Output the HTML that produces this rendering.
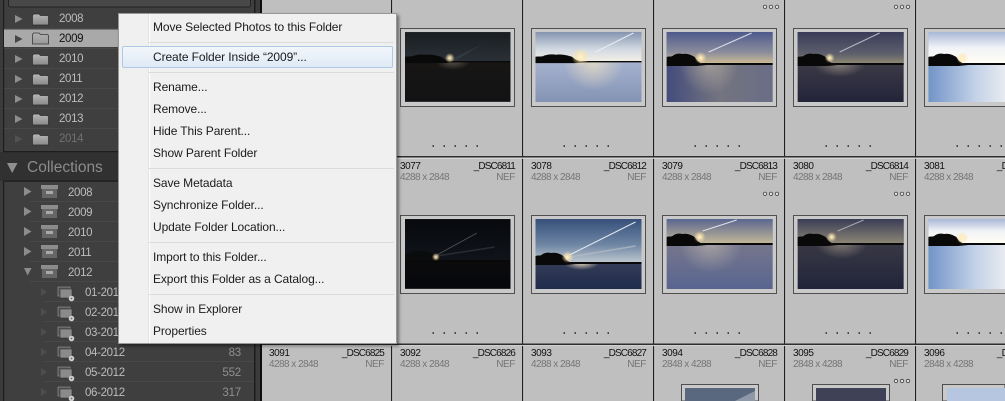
<!DOCTYPE html>
<html><head><meta charset="utf-8"><style>
html,body{margin:0;padding:0;background:#3a3a3a;width:1005px;height:401px;overflow:hidden}
#w{position:relative;width:1005px;height:401px;overflow:hidden;font-family:"Liberation Sans",sans-serif;background:#3a3a3a}
#w div{position:absolute;white-space:nowrap}
svg{position:absolute;left:0;top:0;display:block}
.s{font-size:11.5px;height:16px;line-height:16px;color:#bdbdbd;letter-spacing:-.35px}
.c{font-size:11.5px;height:16px;line-height:16px;color:#8f8f8f;letter-spacing:-.2px;right:764px}
.t{font-size:10px;line-height:11px;height:11px;letter-spacing:-.45px;color:#111}
.u{font-size:10px;line-height:11px;height:11px;letter-spacing:-.55px;color:#757575}
.n{font-size:10px;line-height:11px;height:11px;letter-spacing:-.85px;color:#111;text-align:right;width:70px}
.f{font-size:10px;line-height:11px;height:11px;letter-spacing:-.4px;color:#757575;text-align:right;width:40px}
.m{left:153px;font-size:12px;line-height:16px;height:16px;color:#1b1b1b;letter-spacing:-.1px}
</style></head><body><div id="w">

<svg width="1005" height="401" viewBox="0 0 1005 401">
<defs>
<linearGradient id="fo" x1="0" y1="0" x2="0" y2="1"><stop offset="0" stop-color="#b6b6b6"/><stop offset="1" stop-color="#8a8a8a"/></linearGradient>
<linearGradient id="fs" x1="0" y1="0" x2="0" y2="1"><stop offset="0" stop-color="#b0b0b0"/><stop offset="1" stop-color="#9a9a9a"/></linearGradient>
<path id="fd" d="M.5 12V2.500L1.500 1H7L8.500 2.500H15.500L16.500 3.500V12Z" fill="url(#fo)" stroke="#2c2c2c" stroke-width=".7"/>
<g id="bx"><rect x="0" y="0" width="17" height="4" fill="#8c8c8c"/><rect x="1" y="4" width="15" height="9" fill="#666"/><rect x="5" y="6" width="7" height="3" fill="#a8a8a8"/></g>
<g id="cl"><rect x="0" y="0" width="12" height="9" fill="#555" stroke="#999" stroke-width=".6"/><rect x="2" y="2" width="12" height="9" fill="#8b8b8b" stroke="#333" stroke-width=".6"/><circle cx="13.500" cy="11.500" r="2.800" fill="#cfcfcf"/><circle cx="13.500" cy="11.500" r=".9" fill="#6a6a6a"/></g>
<path id="tree" d="M0 3V-6C2-7 4-6 6-7C8-9 12-10 16-9C20-10 25-8 28-6L31-2L34 0H106V2H40L30 3Z" fill="#090909"/>
<radialGradient id="sun"><stop offset="0" stop-color="#fff7d8"/><stop offset=".3" stop-color="#ffeab4" stop-opacity=".8"/><stop offset="1" stop-color="#ffe0a0" stop-opacity="0"/></radialGradient>
<radialGradient id="refl"><stop offset="0" stop-color="#f7e7c4" stop-opacity=".85"/><stop offset="1" stop-color="#f7e7c4" stop-opacity="0"/></radialGradient>
<linearGradient id="a1" x1="0" y1="0" x2="0" y2="1"><stop offset="0" stop-color="#1a1e22"/><stop offset="1" stop-color="#2a3036"/></linearGradient>
<linearGradient id="b1" x1="0" y1="0" x2="0" y2="1"><stop offset="0" stop-color="#1c1916"/><stop offset="1" stop-color="#121214"/></linearGradient>
<linearGradient id="a2" x1="0" y1="0" x2="0" y2="1"><stop offset="0" stop-color="#8594b0"/><stop offset=".6" stop-color="#d2d9e2"/><stop offset="1" stop-color="#f2efe6"/></linearGradient>
<linearGradient id="b2" x1="0" y1="0" x2="0" y2="1"><stop offset="0" stop-color="#c0cae2"/><stop offset="1" stop-color="#8493b4"/></linearGradient>
<linearGradient id="a3" x1="0" y1="0" x2="0" y2="1"><stop offset="0" stop-color="#4f5a8c"/><stop offset=".65" stop-color="#8b8d9c"/><stop offset="1" stop-color="#cbb995"/></linearGradient>
<linearGradient id="b3" x1="0" y1="0" x2="1" y2="0"><stop offset="0" stop-color="#434c7c"/><stop offset=".5" stop-color="#74747f"/><stop offset="1" stop-color="#6a6d86"/></linearGradient>
<linearGradient id="a4" x1="0" y1="0" x2="0" y2="1"><stop offset="0" stop-color="#383c58"/><stop offset=".7" stop-color="#5d5f6c"/><stop offset="1" stop-color="#8c8672"/></linearGradient>
<linearGradient id="b4" x1="0" y1="0" x2="0" y2="1"><stop offset="0" stop-color="#4f4c50"/><stop offset="1" stop-color="#24243a"/></linearGradient>
<linearGradient id="a5" x1="0" y1="0" x2="0" y2="1"><stop offset="0" stop-color="#a9b8d8"/><stop offset=".5" stop-color="#f0f2f6"/><stop offset="1" stop-color="#fffdf4"/></linearGradient>
<linearGradient id="b5" x1="0" y1="0" x2="1" y2="0"><stop offset="0" stop-color="#7194c8"/><stop offset=".45" stop-color="#c4d2e8"/><stop offset=".8" stop-color="#f2f2f2"/></linearGradient>
<linearGradient id="a6" x1="0" y1="0" x2="0" y2="1"><stop offset="0" stop-color="#07090d"/><stop offset="1" stop-color="#10141a"/></linearGradient>
<linearGradient id="b6" x1="0" y1="0" x2="0" y2="1"><stop offset="0" stop-color="#14120f"/><stop offset="1" stop-color="#06070b"/></linearGradient>
<linearGradient id="a7" x1="0" y1="0" x2="0" y2="1"><stop offset="0" stop-color="#36507a"/><stop offset=".6" stop-color="#6f86a4"/><stop offset="1" stop-color="#bcc6ce"/></linearGradient>
<linearGradient id="b7" x1="0" y1="0" x2="0" y2="1"><stop offset="0" stop-color="#56586a"/><stop offset="1" stop-color="#202c4c"/></linearGradient>
<linearGradient id="a8" x1="0" y1="0" x2="0" y2="1"><stop offset="0" stop-color="#5a6690"/><stop offset="1" stop-color="#c0b698"/></linearGradient>
<linearGradient id="b8" x1="0" y1="0" x2="0" y2="1"><stop offset="0" stop-color="#85808a"/><stop offset="1" stop-color="#596590"/></linearGradient>
<linearGradient id="a9" x1="0" y1="0" x2="0" y2="1"><stop offset="0" stop-color="#3a3d56"/><stop offset="1" stop-color="#8a8574"/></linearGradient>
<linearGradient id="b9" x1="0" y1="0" x2="0" y2="1"><stop offset="0" stop-color="#46434a"/><stop offset="1" stop-color="#21243a"/></linearGradient>
</defs>

<!-- sidebar -->
<rect x="0" y="0" width="262" height="401" fill="#3b3b3b"/>
<rect x="3" y="0" width="252" height="152" fill="#3f3f3f"/>
<rect x="3" y="0" width="1.200" height="152" fill="#1d1d1d"/>
<rect x="254" y="0" width="1.500" height="401" fill="#1c1c1c"/>
<rect x="260" y="0" width="2" height="401" fill="#0d0d0d"/>
<rect x="8.500" y="-6" width="242" height="13" rx="2" fill="#484848" stroke="#222"/>
<rect x="4" y="29.500" width="114" height="17.500" fill="#a9a9a9"/>
<rect x="0" y="152" width="254" height="29" fill="#313131"/>
<rect x="3" y="151" width="251" height="1.200" fill="#1d1d1d"/>
<rect x="3" y="181" width="251" height="220" fill="#3f3f3f"/>
<rect x="3" y="180.500" width="251" height="1.200" fill="#1a1a1a"/>
<rect x="3" y="181" width="1.200" height="220" fill="#1d1d1d"/>
<g fill="#484848"><rect x="4" y="28" width="114" height="1"/><rect x="4" y="48" width="114" height="1"/><rect x="4" y="68" width="114" height="1"/><rect x="4" y="88" width="114" height="1"/><rect x="4" y="108" width="114" height="1"/><rect x="4" y="128" width="114" height="1"/><rect x="30" y="201" width="224" height="1"/><rect x="30" y="221" width="224" height="1"/><rect x="30" y="241" width="224" height="1"/><rect x="30" y="261" width="224" height="1"/><rect x="30" y="281" width="224" height="1"/><rect x="44" y="301" width="210" height="1"/><rect x="44" y="321" width="210" height="1"/><rect x="44" y="341" width="210" height="1"/><rect x="44" y="361" width="210" height="1"/><rect x="44" y="381" width="210" height="1"/></g>

<g fill="#8d8d8d">
<path d="M15 15L22.500 19L15 23Z"/><path fill="#454545" d="M15 35L22.500 39L15 43Z"/><path d="M15 55L22.500 59L15 63Z"/><path d="M15 75L22.500 79L15 83Z"/><path d="M15 95L22.500 99L15 103Z"/><path d="M15 115L22.500 119L15 123Z"/>
<path fill="#525252" d="M15 135L22.500 139L15 143Z"/>
<path fill="#909090" d="M7 163H17.500L12.200 173Z"/>
<path d="M24 187L31.500 191.500L24 196Z"/><path d="M24 207L31.500 211.500L24 216Z"/><path d="M24 227L31.500 231.500L24 236Z"/><path d="M24 247L31.500 251.500L24 256Z"/><path d="M24 268H31.500L27.700 275.500Z"/>
<g fill="#4e4e4e"><path d="M41 288L47 292L41 296Z"/><path d="M41 308L47 312L41 316Z"/><path d="M41 328L47 332L41 336Z"/><path d="M41 348L47 352L41 356Z"/><path d="M41 368L47 372L41 376Z"/><path d="M41 388L47 392L41 396Z"/></g>
</g>
<use href="#fd" x="32" y="13"/>
<g transform="translate(32 32)"><path d="M.5 12V2.500L1.500 1H7L8.500 2.500H15.500L16.500 3.500V12Z" fill="url(#fs)" stroke="#3a3a3a" stroke-width=".8"/></g>
<use href="#fd" x="32" y="53"/><use href="#fd" x="32" y="73"/><use href="#fd" x="32" y="93"/><use href="#fd" x="32" y="113"/><use href="#fd" x="32" y="133"/>
<use href="#bx" x="41" y="185"/><use href="#bx" x="41" y="205"/><use href="#bx" x="41" y="225"/><use href="#bx" x="41" y="245"/><use href="#bx" x="41" y="265"/>
<use href="#cl" x="58" y="287"/><use href="#cl" x="58" y="307"/><use href="#cl" x="58" y="327"/><use href="#cl" x="58" y="347"/><use href="#cl" x="58" y="367"/><use href="#cl" x="58" y="387"/>

<!-- grid -->
<rect x="262" y="0" width="743" height="401" fill="#bfbfbf"/>
<g fill="#1f1f1f"><rect x="391" width="1.300" height="401"/><rect x="522" width="1.300" height="401"/><rect x="653" width="1.300" height="401"/><rect x="784" width="1.300" height="401"/><rect x="915" width="1.300" height="401"/></g>
<g fill="#d6d6d6"><rect x="392.300" width=".8" height="401"/><rect x="523.300" width=".8" height="401"/><rect x="654.300" width=".8" height="401"/><rect x="785.300" width=".8" height="401"/><rect x="916.300" width=".8" height="401"/></g>
<rect x="262" y="156" width="743" height="1.600" fill="#2e2e2e"/><rect x="262" y="157.600" width="743" height="1.200" fill="#dcdcdc"/>
<rect x="262" y="343.500" width="743" height="1.600" fill="#2e2e2e"/><rect x="262" y="345.100" width="743" height="1" fill="#d4d4d4"/>

<!-- frames -->
<g fill="#c9c9c9" stroke="#4f4f4f" stroke-width="1">
<rect x="400.500" y="28.500" width="114" height="78"/><rect x="531.500" y="28.500" width="114" height="78"/><rect x="662.500" y="28.500" width="114" height="78"/><rect x="793.500" y="28.500" width="114" height="78"/><rect x="924.500" y="28.500" width="114" height="78"/>
<rect x="400.500" y="215.500" width="114" height="78"/><rect x="531.500" y="215.500" width="114" height="78"/><rect x="662.500" y="215.500" width="114" height="78"/><rect x="793.500" y="215.500" width="114" height="78"/><rect x="924.500" y="215.500" width="114" height="78"/>
<path d="M681.500 401V384.500H758.500V401Z"/><path d="M812.500 401V384.500H889.500V401Z"/><path d="M942.500 401V384.500H1005V401Z"/>
</g>

<!-- photos row 1 -->
<svg x="405" y="32" width="105.500" height="70" viewBox="0 0 106 70"><rect width="106" height="70" fill="url(#b1)"/><ellipse cx="48" cy="29" rx="18" ry="9" fill="url(#refl)" opacity=".35"/><rect width="106" height="29" fill="url(#a1)"/><path d="M45 28L78 12L48 30Z" fill="#3c454e" opacity=".6"/><use href="#tree" transform="translate(0 29) scale(1.300 .7)"/><circle cx="45" cy="26" r="5" fill="url(#sun)"/></svg>
<svg x="535.500" y="32" width="106" height="70" viewBox="0 0 106 70"><rect width="106" height="70" fill="url(#b2)"/><ellipse cx="58" cy="30" rx="30" ry="28" fill="url(#refl)" opacity=".8"/><rect width="106" height="29" fill="url(#a2)"/><path d="M60 20L98 1" stroke="#e8edf5" stroke-width="1"/><use href="#tree" transform="translate(0 29) scale(1.300 .7)"/><circle cx="45" cy="25" r="9" fill="url(#sun)"/></svg>
<svg x="666.300" y="32" width="106.700" height="70" viewBox="0 0 106 70"><rect width="106" height="70" fill="url(#b3)"/><ellipse cx="42" cy="31" rx="30" ry="32" fill="url(#refl)" opacity=".45"/><rect width="106" height="31" fill="url(#a3)"/><path d="M42 20L85 1" stroke="#d8dce8" stroke-width="1.200"/><use href="#tree" y="31"/><circle cx="34" cy="26" r="6" fill="url(#sun)"/></svg>
<svg x="797.300" y="32" width="106.700" height="70" viewBox="0 0 106 70"><rect width="106" height="70" fill="url(#b4)"/><ellipse cx="42" cy="31" rx="26" ry="14" fill="url(#refl)" opacity=".5"/><rect width="106" height="31" fill="url(#a4)"/><path d="M42 20L82 1" stroke="#b4b8c4" stroke-width="1"/><use href="#tree" y="31"/><circle cx="32" cy="26" r="5" fill="url(#sun)"/></svg>
<svg x="928.300" y="32" width="106" height="70" viewBox="0 0 106 70"><rect width="106" height="70" fill="url(#b5)"/><rect width="106" height="31" fill="url(#a5)"/><use href="#tree" y="31"/><circle cx="34" cy="26" r="6" fill="url(#sun)"/></svg>

<!-- photos row 2 -->
<svg x="405" y="219" width="105.500" height="70" viewBox="0 0 106 70"><rect width="106" height="70" fill="url(#b6)"/><rect width="106" height="41" fill="url(#a6)"/><path d="M32 36L72 14" stroke="#4d5054" stroke-width=".9"/><path d="M32 37L90 28" stroke="#2a2c30" stroke-width="1.500"/><use href="#tree" y="41" opacity=".7"/><circle cx="31" cy="38" r="4" fill="url(#sun)"/></svg>
<svg x="535.500" y="219" width="106" height="70" viewBox="0 0 106 70"><rect width="106" height="70" fill="url(#b7)"/><ellipse cx="46" cy="44" rx="18" ry="7" fill="url(#refl)"/><rect width="106" height="43" fill="url(#a7)"/><path d="M34 36L100 3" stroke="#dfe6ee" stroke-width="1.100"/><path d="M34 38L100 27" stroke="#b7bcc4" stroke-width="1.500" opacity=".7"/><use href="#tree" y="43"/><circle cx="32" cy="38" r="6" fill="url(#sun)"/></svg>
<svg x="666.300" y="219" width="106.700" height="70" viewBox="0 0 106 70"><rect width="106" height="70" fill="url(#b8)"/><ellipse cx="44" cy="24" rx="32" ry="30" fill="url(#refl)" opacity=".45"/><rect width="106" height="24" fill="url(#a8)"/><path d="M36 12L70 1" stroke="#dfe2e8" stroke-width="1"/><use href="#tree" y="24"/><circle cx="33" cy="18" r="6" fill="url(#sun)"/></svg>
<svg x="797.300" y="219" width="106.700" height="70" viewBox="0 0 106 70"><rect width="106" height="70" fill="url(#b9)"/><ellipse cx="44" cy="24" rx="26" ry="16" fill="url(#refl)" opacity=".45"/><rect width="106" height="24" fill="url(#a9)"/><path d="M40 12L66 1" stroke="#a6a8ae" stroke-width="1"/><use href="#tree" y="24"/><circle cx="34" cy="18" r="5" fill="url(#sun)"/></svg>
<svg x="928.300" y="219" width="106" height="70" viewBox="0 0 106 70"><rect width="106" height="70" fill="url(#b5)"/><rect width="106" height="24" fill="url(#a5)"/><use href="#tree" y="24"/><circle cx="34" cy="19" r="6" fill="url(#sun)"/></svg>

<!-- portrait row 3 -->
<rect x="685" y="388" width="70" height="13" fill="#59687f"/><path d="M735 401L755 391V401Z" fill="#8e99a8"/>
<rect x="816" y="388" width="70" height="13" fill="#3f4257"/>
<rect x="947" y="388" width="58" height="13" fill="#b7c6e0"/>

<!-- rating dots -->
<g fill="#222">
<rect x="432.500" y="145.300" width="1.500" height="1.500"/><rect x="443.500" y="145.300" width="1.500" height="1.500"/><rect x="454.500" y="145.300" width="1.500" height="1.500"/><rect x="465.500" y="145.300" width="1.500" height="1.500"/><rect x="476.500" y="145.300" width="1.500" height="1.500"/>
<rect x="563.500" y="145.300" width="1.500" height="1.500"/><rect x="574.500" y="145.300" width="1.500" height="1.500"/><rect x="585.500" y="145.300" width="1.500" height="1.500"/><rect x="596.500" y="145.300" width="1.500" height="1.500"/><rect x="607.500" y="145.300" width="1.500" height="1.500"/>
<rect x="694.500" y="145.300" width="1.500" height="1.500"/><rect x="705.500" y="145.300" width="1.500" height="1.500"/><rect x="716.500" y="145.300" width="1.500" height="1.500"/><rect x="727.500" y="145.300" width="1.500" height="1.500"/><rect x="738.500" y="145.300" width="1.500" height="1.500"/>
<rect x="825.500" y="145.300" width="1.500" height="1.500"/><rect x="836.500" y="145.300" width="1.500" height="1.500"/><rect x="847.500" y="145.300" width="1.500" height="1.500"/><rect x="858.500" y="145.300" width="1.500" height="1.500"/><rect x="869.500" y="145.300" width="1.500" height="1.500"/>
<rect x="956.500" y="145.300" width="1.500" height="1.500"/><rect x="967.500" y="145.300" width="1.500" height="1.500"/><rect x="978.500" y="145.300" width="1.500" height="1.500"/><rect x="989.500" y="145.300" width="1.500" height="1.500"/><rect x="1000.500" y="145.300" width="1.500" height="1.500"/>
<rect x="432.500" y="332.300" width="1.500" height="1.500"/><rect x="443.500" y="332.300" width="1.500" height="1.500"/><rect x="454.500" y="332.300" width="1.500" height="1.500"/><rect x="465.500" y="332.300" width="1.500" height="1.500"/><rect x="476.500" y="332.300" width="1.500" height="1.500"/>
<rect x="563.500" y="332.300" width="1.500" height="1.500"/><rect x="574.500" y="332.300" width="1.500" height="1.500"/><rect x="585.500" y="332.300" width="1.500" height="1.500"/><rect x="596.500" y="332.300" width="1.500" height="1.500"/><rect x="607.500" y="332.300" width="1.500" height="1.500"/>
<rect x="694.500" y="332.300" width="1.500" height="1.500"/><rect x="705.500" y="332.300" width="1.500" height="1.500"/><rect x="716.500" y="332.300" width="1.500" height="1.500"/><rect x="727.500" y="332.300" width="1.500" height="1.500"/><rect x="738.500" y="332.300" width="1.500" height="1.500"/>
<rect x="825.500" y="332.300" width="1.500" height="1.500"/><rect x="836.500" y="332.300" width="1.500" height="1.500"/><rect x="847.500" y="332.300" width="1.500" height="1.500"/><rect x="858.500" y="332.300" width="1.500" height="1.500"/><rect x="869.500" y="332.300" width="1.500" height="1.500"/>
<rect x="956.500" y="332.300" width="1.500" height="1.500"/><rect x="967.500" y="332.300" width="1.500" height="1.500"/><rect x="978.500" y="332.300" width="1.500" height="1.500"/><rect x="989.500" y="332.300" width="1.500" height="1.500"/><rect x="1000.500" y="332.300" width="1.500" height="1.500"/>
</g>

<!-- ellipsis circles -->
<g fill="#e4e4e4" stroke="#3a3a3a" stroke-width=".8">
<circle cx="765" cy="6.800" r="1.700"/><circle cx="771" cy="6.800" r="1.700"/><circle cx="777" cy="6.800" r="1.700"/>
<circle cx="896" cy="6.800" r="1.700"/><circle cx="902" cy="6.800" r="1.700"/><circle cx="908" cy="6.800" r="1.700"/>
<circle cx="765" cy="193.800" r="1.700"/><circle cx="771" cy="193.800" r="1.700"/><circle cx="777" cy="193.800" r="1.700"/>
<circle cx="896" cy="193.800" r="1.700"/><circle cx="902" cy="193.800" r="1.700"/><circle cx="908" cy="193.800" r="1.700"/>
<circle cx="896" cy="381" r="1.700"/><circle cx="902" cy="381" r="1.700"/><circle cx="908" cy="381" r="1.700"/>
</g>
</svg>

<!-- sidebar text -->
<div class="s" style="left:59px;top:11px">2008</div>
<div class="s" style="left:59px;top:31px;color:#111">2009</div>
<div class="s" style="left:59px;top:51px">2010</div>
<div class="s" style="left:59px;top:71px">2011</div>
<div class="s" style="left:59px;top:91px">2012</div>
<div class="s" style="left:59px;top:111px">2013</div>
<div class="s" style="left:59px;top:131px;color:#707070">2014</div>
<div style="left:27px;top:158px;font-size:15.500px;line-height:20px;color:#8c8c8c">Collections</div>
<div class="s" style="left:68px;top:185px">2008</div>
<div class="s" style="left:68px;top:205px">2009</div>
<div class="s" style="left:68px;top:225px">2010</div>
<div class="s" style="left:68px;top:245px">2011</div>
<div class="s" style="left:68px;top:265px">2012</div>
<div class="s" style="left:85px;top:285px">01-2012</div>
<div class="s" style="left:85px;top:305px">02-2012</div>
<div class="s" style="left:85px;top:325px">03-2012</div>
<div class="s" style="left:85px;top:345px">04-2012</div>
<div class="s" style="left:85px;top:365px">05-2012</div>
<div class="s" style="left:85px;top:385px">06-2012</div>
<div class="c" style="top:345px">83</div>
<div class="c" style="top:365px">552</div>
<div class="c" style="top:385px">317</div>

<!-- row 1 captions -->
<div class="t" style="left:400px;top:161px">3077</div><div class="n" style="left:445px;top:161px">_DSC6811</div><div class="u" style="left:400px;top:172px">4288 x 2848</div><div class="f" style="left:475px;top:172px">NEF</div>
<div class="t" style="left:531px;top:161px">3078</div><div class="n" style="left:576px;top:161px">_DSC6812</div><div class="u" style="left:531px;top:172px">4288 x 2848</div><div class="f" style="left:606px;top:172px">NEF</div>
<div class="t" style="left:662px;top:161px">3079</div><div class="n" style="left:707px;top:161px">_DSC6813</div><div class="u" style="left:662px;top:172px">4288 x 2848</div><div class="f" style="left:737px;top:172px">NEF</div>
<div class="t" style="left:793px;top:161px">3080</div><div class="n" style="left:838px;top:161px">_DSC6814</div><div class="u" style="left:793px;top:172px">4288 x 2848</div><div class="f" style="left:868px;top:172px">NEF</div>
<div class="t" style="left:924px;top:161px">3081</div><div class="n" style="left:969px;top:161px">_DSC6815</div><div class="u" style="left:924px;top:172px">4288 x 2848</div>

<!-- row 2 captions -->
<div class="t" style="left:269px;top:348px">3091</div><div class="n" style="left:314px;top:348px">_DSC6825</div><div class="u" style="left:269px;top:359px">4288 x 2848</div><div class="f" style="left:344px;top:359px">NEF</div>
<div class="t" style="left:400px;top:348px">3092</div><div class="n" style="left:445px;top:348px">_DSC6826</div><div class="u" style="left:400px;top:359px">4288 x 2848</div><div class="f" style="left:475px;top:359px">NEF</div>
<div class="t" style="left:531px;top:348px">3093</div><div class="n" style="left:576px;top:348px">_DSC6827</div><div class="u" style="left:531px;top:359px">4288 x 2848</div><div class="f" style="left:606px;top:359px">NEF</div>
<div class="t" style="left:662px;top:348px">3094</div><div class="n" style="left:707px;top:348px">_DSC6828</div><div class="u" style="left:662px;top:359px">2848 x 4288</div><div class="f" style="left:737px;top:359px">NEF</div>
<div class="t" style="left:793px;top:348px">3095</div><div class="n" style="left:838px;top:348px">_DSC6829</div><div class="u" style="left:793px;top:359px">2848 x 4288</div><div class="f" style="left:868px;top:359px">NEF</div>
<div class="t" style="left:924px;top:348px">3096</div><div class="n" style="left:969px;top:348px">_DSC6830</div><div class="u" style="left:924px;top:359px">2848 x 4288</div>

<!-- context menu -->
<div style="left:118px;top:13px;width:277px;height:329px;background:#f0f0f0;border:1px solid #979797;box-shadow:2px 2px 3px rgba(0,0,0,.45)"></div>
<div style="left:148px;top:14px;width:1px;height:329px;background:#e2e2e2"></div>
<div style="left:149px;top:14px;width:1px;height:329px;background:#fff"></div>
<div style="left:149px;top:42px;width:245px;height:1px;background:#dcdcdc"></div>
<div style="left:149px;top:72px;width:245px;height:1px;background:#dcdcdc"></div>
<div style="left:149px;top:168px;width:245px;height:1px;background:#dcdcdc"></div>
<div style="left:149px;top:242px;width:245px;height:1px;background:#dcdcdc"></div>
<div style="left:149px;top:294px;width:245px;height:1px;background:#dcdcdc"></div>
<div style="left:122px;top:46px;width:269px;height:20px;border:1px solid #aec9e6;border-radius:2px;background:linear-gradient(#f2f6fb,#dfeaf6)"></div>
<div class="m" style="top:19px">Move Selected Photos to this Folder</div>
<div class="m" style="top:49px">Create Folder Inside “2009”...</div>
<div class="m" style="top:79px">Rename...</div>
<div class="m" style="top:101px">Remove...</div>
<div class="m" style="top:123px">Hide This Parent...</div>
<div class="m" style="top:145px">Show Parent Folder</div>
<div class="m" style="top:175px">Save Metadata</div>
<div class="m" style="top:197px">Synchronize Folder...</div>
<div class="m" style="top:219px">Update Folder Location...</div>
<div class="m" style="top:249px">Import to this Folder...</div>
<div class="m" style="top:271px">Export this Folder as a Catalog...</div>
<div class="m" style="top:301px">Show in Explorer</div>
<div class="m" style="top:323px">Properties</div>
</div></body></html>
